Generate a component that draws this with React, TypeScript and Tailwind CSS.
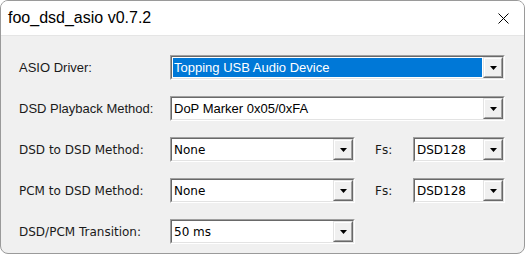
import React from "react";

const SEGOE = "font-['Liberation_Sans',Arial,sans-serif]";
const TAHOMA = "font-['DejaVu_Sans',Verdana,sans-serif]";

function Arrow() {
  return (
    <div className="flex h-full w-[20px] shrink-0 border border-t-[#e3e3e3] border-l-[#e3e3e3] border-r-[#696969] border-b-[#696969]">
      <div className="flex flex-1 items-center justify-center border border-t-white border-l-white border-r-[#a0a0a0] border-b-[#a0a0a0] bg-[#f0f0f0]">
        <svg width="7" height="4" viewBox="0 0 7 4">
          <polygon points="0,0 7,0 3.5,4" fill="#000" />
        </svg>
      </div>
    </div>
  );
}

function Combo({
  value,
  width,
  selected,
  tahoma,
}: {
  value: string;
  width: string;
  selected?: boolean;
  tahoma?: boolean;
}) {
  return (
    <div
      className={`h-[25px] ${width} border border-t-[#a0a0a0] border-l-[#a0a0a0] border-r-white border-b-white`}
    >
      <div className="flex h-full border border-t-[#696969] border-l-[#696969] border-r-[#e3e3e3] border-b-[#e3e3e3] bg-white">
        <div className="flex min-w-0 flex-1 p-px">
          <div
            className={`flex flex-1 items-center pl-px leading-none ${
              tahoma ? `${TAHOMA} text-[12px]` : `${SEGOE} text-[13px]`
            } ${selected ? "bg-[#0078d7] text-white" : "text-black"}`}
          >
            {value}
          </div>
        </div>
        <Arrow />
      </div>
    </div>
  );
}

function Label({ text, tahoma, w = "w-[151px]" }: { text: string; tahoma?: boolean; w?: string }) {
  return (
    <div
      className={`${w} shrink-0 text-[#1a1a1a] ${
        tahoma ? `${TAHOMA} text-[12px]` : `${SEGOE} text-[13px]`
      }`}
    >
      {text}
    </div>
  );
}

export default function App() {
  return (
    <div className="h-[257px] w-[527px] overflow-hidden bg-white">
      <div className="flex h-[254px] w-[525px] flex-col overflow-hidden rounded-lg border border-[#9a9a9a] bg-[#f0f0f0]">
        <div className="flex h-[35px] shrink-0 items-center justify-between border-b border-[#e5e5e5] bg-white pl-[7px] pr-[15px]">
          <span className={`${SEGOE} text-[16px] text-black`}>foo_dsd_asio v0.7.2</span>
          <svg width="11" height="11" viewBox="0 0 11 11">
            <path d="M0.5 0.5 L10.5 10.5 M10.5 0.5 L0.5 10.5" stroke="#000" strokeWidth="1" />
          </svg>
        </div>

        <div className="flex flex-col gap-4 pl-[18px] pt-[19px]">
          <div className="flex items-center">
            <Label text="ASIO Driver:" />
            <Combo value="Topping USB Audio Device" width="w-[335px]" selected />
          </div>
          <div className="flex items-center">
            <Label text="DSD Playback Method:" />
            <Combo value="DoP Marker 0x05/0xFA" width="w-[335px]" />
          </div>
          <div className="flex items-center">
            <Label text="DSD to DSD Method:" tahoma />
            <Combo value="None" width="w-[185px]" tahoma />
            <div className="w-[20px]" />
            <Label text="Fs:" tahoma w="w-[38px]" />
            <Combo value="DSD128" width="w-[92px]" tahoma />
          </div>
          <div className="flex items-center">
            <Label text="PCM to DSD Method:" tahoma />
            <Combo value="None" width="w-[185px]" tahoma />
            <div className="w-[20px]" />
            <Label text="Fs:" tahoma w="w-[38px]" />
            <Combo value="DSD128" width="w-[92px]" tahoma />
          </div>
          <div className="flex items-center">
            <Label text="DSD/PCM Transition:" tahoma />
            <Combo value="50 ms" width="w-[185px]" tahoma />
          </div>
        </div>
      </div>
    </div>
  );
}
